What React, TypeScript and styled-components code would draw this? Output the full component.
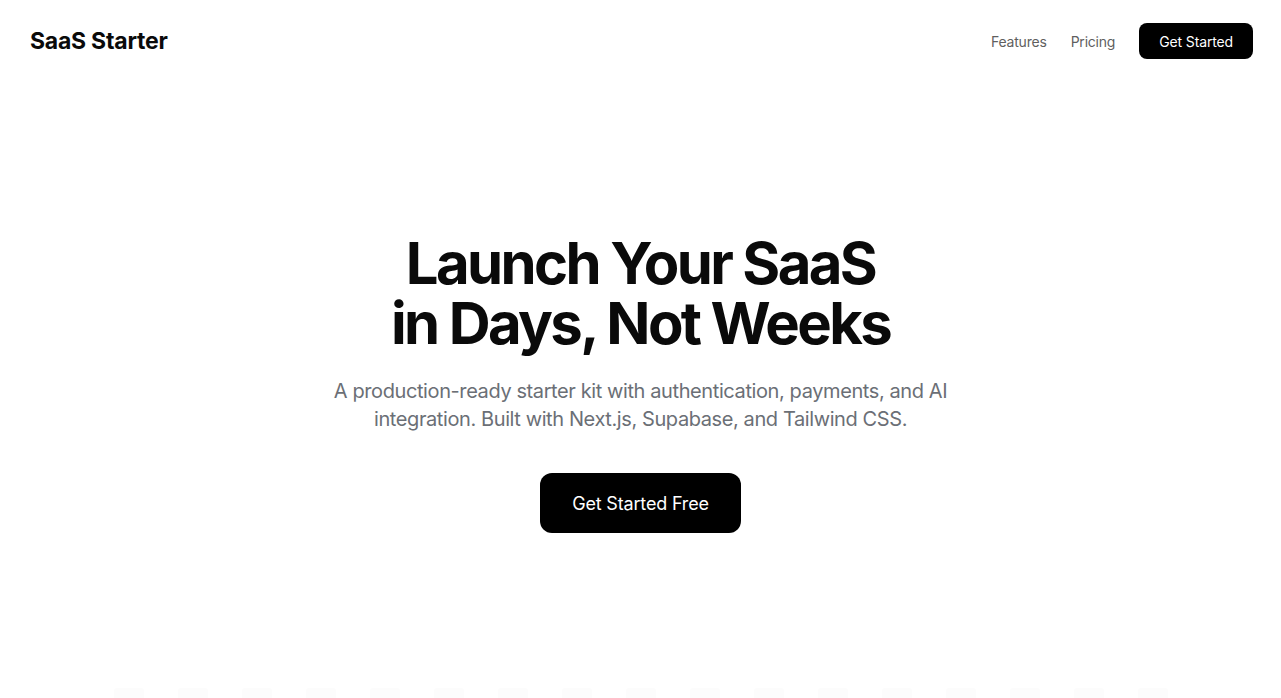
import styled, { createGlobalStyle } from "styled-components";

const GlobalStyle = createGlobalStyle`
  * {
    box-sizing: border-box;
  }
  body {
    margin: 0;
    background: #ffffff;
    font-family: "Inter", "Liberation Sans", sans-serif;
    color: #0a0a0a;
  }
`;

const Page = styled.div`
  min-height: 100vh;
  display: flex;
  flex-direction: column;
`;

const Header = styled.header`
  height: 82px;
  display: flex;
  align-items: center;
  justify-content: space-between;
  padding: 0 28px 0 30px;
`;

const Logo = styled.div`
  font-size: 23px;
  font-weight: 700;
  letter-spacing: -0.01em;
  color: #0a0a0a;
`;

const Nav = styled.nav`
  display: flex;
  align-items: center;
  gap: 24px;
`;

const NavLink = styled.a`
  font-size: 14px;
  letter-spacing: -0.015em;
  color: #5f5f5f;
  text-decoration: none;
  cursor: pointer;
`;

const Button = styled.a<{ $size?: "sm" | "lg" }>`
  display: inline-flex;
  align-items: center;
  justify-content: center;
  background: #000000;
  color: #ffffff;
  text-decoration: none;
  cursor: pointer;
  letter-spacing: -0.01em;
  height: ${(p) => (p.$size === "lg" ? "60px" : "36px")};
  padding: ${(p) => (p.$size === "lg" ? "0 32px" : "0 20px")};
  border-radius: ${(p) => (p.$size === "lg" ? "12px" : "8px")};
  font-size: ${(p) => (p.$size === "lg" ? "18px" : "14px")};
`;

const Hero = styled.section`
  display: flex;
  flex-direction: column;
  align-items: center;
  text-align: center;
  padding: 151px 24px 0;
`;

const Title = styled.h1`
  margin: 0;
  font-size: 58px;
  line-height: 60px;
  font-weight: 700;
  letter-spacing: -0.045em;
  color: #0a0a0a;
`;

const Subtitle = styled.p`
  margin: 24px 0 0;
  max-width: 640px;
  font-size: 20px;
  line-height: 28px;
  color: #6b6f76;
  letter-spacing: -0.02em;
`;

const Actions = styled.div`
  margin-top: 40px;
`;

const Faint = styled.section`
  margin-top: 155px;
  display: flex;
  justify-content: center;
  gap: 34px;
  padding: 0 110px;
`;

const Ghost = styled.span`
  width: 30px;
  height: 12px;
  border-radius: 3px;
  background: #fcfcfc;
`;

export default function App() {
  return (
    <Page>
      <GlobalStyle />
      <Header>
        <Logo>SaaS Starter</Logo>
        <Nav>
          <NavLink>Features</NavLink>
          <NavLink>Pricing</NavLink>
          <Button $size="sm">Get Started</Button>
        </Nav>
      </Header>
      <Hero>
        <Title>
          Launch Your SaaS
          <br />
          in Days, Not Weeks
        </Title>
        <Subtitle>
          A production-ready starter kit with authentication, payments, and AI
          integration. Built with Next.js, Supabase, and Tailwind CSS.
        </Subtitle>
        <Actions>
          <Button $size="lg">Get Started Free</Button>
        </Actions>
      </Hero>
      <Faint>
        {Array.from({ length: 17 }).map((_, i) => (
          <Ghost key={i} />
        ))}
      </Faint>
    </Page>
  );
}
